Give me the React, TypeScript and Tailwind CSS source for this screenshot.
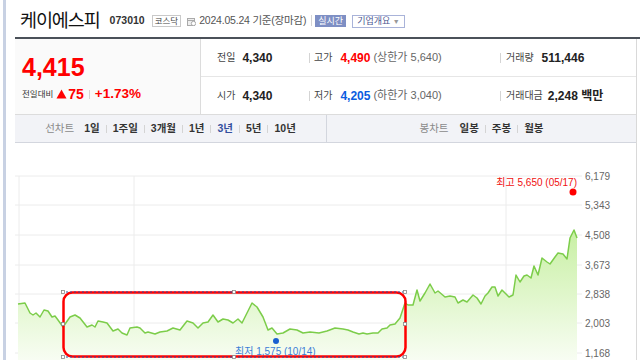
import React from 'react'

const FONT = 'font-["Liberation_Sans","Noto_Sans_CJK_KR",sans-serif]'

const pts: [number, number][] = [[18,304],[25,303],[30,313],[33,315],[36,313],[40,317],[44,310],[48,311],[52,317],[55,316],[58,320],[63,327],[70,317],[75,315],[80,318],[87,327],[92,325],[95,327],[98,321],[103,322],[107,323],[113,331],[118,329],[122,333],[127,335],[130,328],[137,327],[140,328],[145,333],[148,332],[155,334],[160,332],[167,331],[173,328],[180,330],[187,321],[193,323],[198,328],[203,323],[208,322],[213,315],[218,322],[223,319],[228,320],[233,323],[238,319],[242,323],[247,313],[252,303],[257,307],[263,317],[268,330],[272,328],[277,334],[283,333],[290,329],[297,330],[303,333],[310,332],[319,333],[327,331],[335,328],[343,329],[348,330],[353,332],[359,334],[363,333],[367,334],[373,333],[378,333],[382,329],[387,328],[390,325],[395,324],[400,318],[405,303],[408,305],[413,305],[417,290],[420,301],[425,293],[430,284],[435,293],[438,291],[445,297],[450,296],[455,297],[458,303],[463,300],[467,302],[473,295],[477,298],[481,304],[485,296],[488,293],[492,287],[495,287],[498,296],[502,290],[505,293],[509,297],[513,295],[516,275],[520,282],[524,276],[527,275],[531,278],[534,266],[538,275],[542,258],[547,262],[550,264],[555,257],[558,253],[563,254],[567,259],[570,238],[574,230],[577,238]]

const yLabels: [string, number][] = [['6,179',176],['5,343',205],['4,508',235],['3,673',265],['2,838',294],['2,003',323],['1,168',353]]

function Sep({ h = 'h-[10px]' }: { h?: string }) {
  return <span className={`inline-block w-px ${h} bg-[#d4d4d4]`} />
}

function Chart() {
  const line = pts.map(p => p.join(',')).join(' ')
  const area = line + ' 577,360 18,360'
  const handles: [number, number][] = [[63,292],[63,324],[63,357],[234,292],[234,357],[405,292],[405,324],[405,357]]
  return (
    <svg width={621} height={217} viewBox="15 143 621 217" className="block">
      <defs>
        <linearGradient id="g" x1="0" y1="225" x2="0" y2="360" gradientUnits="userSpaceOnUse">
          <stop offset="0" stopColor="#c6efa0" />
          <stop offset="1" stopColor="#f8fdf3" />
        </linearGradient>
      </defs>
      {yLabels.map(([t, y]) => (
        <g key={t}>
          <line x1={15} x2={582} y1={y} y2={y} stroke="#ececec" />
          <text x={585} y={y + 4} fontSize={10} fill="#666">{t}</text>
        </g>
      ))}
      {[19, 134, 506].map(x => <line key={x} x1={x} x2={x} y1={176} y2={360} stroke="#ececec" />)}
      <polygon points={area} fill="url(#g)" />
      <polyline points={line} fill="none" stroke="#7ccd4a" strokeWidth={1.5} strokeLinejoin="round" />
      <text x={577} y={186} fontSize={10} fill="#f01010" textAnchor="end">최고 5,650 (05/17)</text>
      <circle cx={573} cy={192} r={3.5} fill="#f00" />
      <circle cx={276} cy={341} r={3} fill="#1a5fd0" />
      <text x={235} y={355} fontSize={10} fill="#3d80d6">최저 1,575 (10/14)</text>
      <rect x={63.5} y={292.5} width={342} height={64} rx={9} fill="none" stroke="#ff0000" strokeWidth={2.5} />
      <line x1={66} x2={403} y1={292} y2={292} stroke="#2a4aa0" strokeWidth={1} strokeDasharray="2 2" />
      <line x1={66} x2={403} y1={357} y2={357} stroke="#2a4aa0" strokeWidth={1} strokeDasharray="2 2" />
      {handles.map(([x, y]) => (
        <rect key={x + '-' + y} x={x - 1.5} y={y - 1.5} width={3} height={3} fill="#fff" stroke="#888" strokeWidth={0.8} />
      ))}
    </svg>
  )
}

export default function App() {
  return (
    <div className={`flex h-[360px] w-[640px] overflow-hidden bg-white text-[#222] ${FONT}`}>
      <div className="ml-[3px] w-[3px] shrink-0 bg-[#c8d1e3]" />
      <div className="ml-[9px] flex w-[625px] flex-col">
        {/* header */}
        <div className="flex h-[37px] items-center pt-[5px] pl-[5px]">
          <span className="text-[18.5px] tracking-[-1.1px] text-[#111]">케이에스피</span>
          <span className="ml-[10px] text-[10.5px] font-bold text-[#333]">073010</span>
          <span className="ml-[7px] border border-[#c9c9c9] px-[2px] text-[8.5px] leading-[10px] text-[#444]">코스닥</span>
          <svg width="9" height="9" viewBox="0 0 9 9" className="ml-[6px]">
            <rect x="0.5" y="1.5" width="7" height="7" fill="#eee" stroke="#aaa" />
            <line x1="0.5" x2="7.5" y1="3.5" y2="3.5" stroke="#aaa" />
            <circle cx="6.5" cy="6.5" r="2.2" fill="#fff" stroke="#999" strokeWidth="0.8" />
          </svg>
          <span className="ml-[3px] text-[10.5px] tracking-[-0.2px] text-[#555]">2024.05.24 기준(장마감)</span>
          <span className="ml-[5px] mr-[3px]"><Sep h="h-[11px]" /></span>
          <span className="bg-[#7e8fc4] px-[3px] text-[9px] leading-[12px] text-white">실시간</span>
          <span className="ml-[6px] border border-[#a9b3d9] px-[4px] text-[9px] leading-[10px] text-[#4a5790]">기업개요 <span className="text-[7px] text-[#999]">▼</span></span>
        </div>
        <div className="h-[2px] bg-[#4b5159]" />
        <div className="flex w-[622px] flex-1 flex-col border-r border-[#d9d9d9]">
          {/* summary */}
          <div className="flex h-[76px] border-b border-[#dcdcdc]">
            <div className="w-[186px] shrink-0 border-r border-[#dcdcdc] bg-[#fafafa] pl-[7px] pt-[14px]">
              <div className="text-[25px] font-bold leading-[28px] text-[#f00]">4,415</div>
              <div className="mt-[1px] flex items-center">
                <span className="text-[8.5px] text-[#333]">전일대비</span>
                <svg width="11" height="10" viewBox="0 0 11 10" className="ml-[3px] mr-[1px]">
                  <polygon points="5.5,0.5 10.5,9.5 0.5,9.5" fill="#f00" />
                </svg>
                <span className="text-[14px] font-bold text-[#f00]">75</span>
                <span className="mx-[5px]"><Sep h="h-[9px]" /></span>
                <span className="text-[13.5px] font-bold text-[#f00]">+1.73%</span>
              </div>
            </div>
            <div className="flex flex-1 flex-col text-[12px]">
              <div className="flex h-[38px] items-center border-b border-[#e6e6e6]">
                <div className="flex w-[108px] items-center pl-[16px]">
                  <span className="text-[10px] text-[#444]">전일</span>
                  <span className="ml-[7px] font-bold">4,340</span>
                </div>
                <div className="flex w-[191px] items-center">
                  <Sep />
                  <span className="ml-[4px] text-[10px] text-[#444]">고가</span>
                  <span className="ml-[8px] font-bold text-[#f00]">4,490</span>
                  <span className="ml-[3px] text-[11px] text-[#666]">(상한가 5,640)</span>
                </div>
                <div className="flex items-center">
                  <Sep />
                  <span className="ml-[5px] text-[10px] text-[#444]">거래량</span>
                  <span className="ml-[8px] font-bold">511,446</span>
                </div>
              </div>
              <div className="flex h-[37px] items-center">
                <div className="flex w-[108px] items-center pl-[16px]">
                  <span className="text-[10px] text-[#444]">시가</span>
                  <span className="ml-[7px] font-bold">4,340</span>
                </div>
                <div className="flex w-[191px] items-center">
                  <Sep />
                  <span className="ml-[4px] text-[10px] text-[#444]">저가</span>
                  <span className="ml-[8px] font-bold text-[#0a5ce0]">4,205</span>
                  <span className="ml-[3px] text-[11px] text-[#666]">(하한가 3,040)</span>
                </div>
                <div className="flex items-center">
                  <Sep />
                  <span className="ml-[5px] text-[10px] text-[#444]">거래대금</span>
                  <span className="ml-[5px] font-bold">2,248 백만</span>
                </div>
              </div>
            </div>
          </div>
          {/* tabs */}
          <div className="flex h-[28px] border-b border-[#d3d6de] bg-[#f2f3f7] text-[10.5px] font-bold text-[#333]">
            <div className="flex w-[312px] items-center justify-center gap-[6px] border-r border-[#d3d6de]">
              <span className="mr-[4px] font-normal text-[#8a8a8a]">선차트</span>
              <span>1일</span><Sep h="h-[8px]" />
              <span>1주일</span><Sep h="h-[8px]" />
              <span>3개월</span><Sep h="h-[8px]" />
              <span>1년</span><Sep h="h-[8px]" />
              <span className="text-[#34509f]">3년</span><Sep h="h-[8px]" />
              <span>5년</span><Sep h="h-[8px]" />
              <span>10년</span>
            </div>
            <div className="flex flex-1 items-center justify-center gap-[6px]">
              <span className="mr-[5px] font-normal text-[#8a8a8a]">봉차트</span>
              <span>일봉</span><Sep h="h-[8px]" />
              <span>주봉</span><Sep h="h-[8px]" />
              <span>월봉</span>
            </div>
          </div>
          <Chart />
        </div>
      </div>
    </div>
  )
}
